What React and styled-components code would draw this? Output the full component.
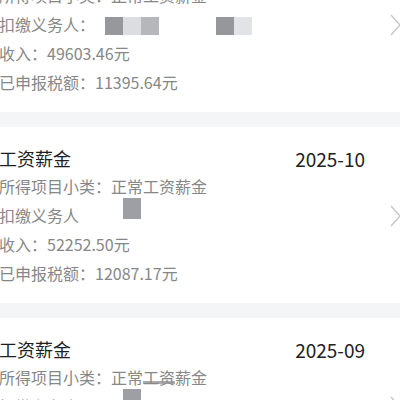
import React from "react";
import styled, { createGlobalStyle } from "styled-components";

const Global = createGlobalStyle`
  html, body {
    margin: 0;
    padding: 0;
    background: #f4f5f7;
    font-family: "Noto Sans CJK SC", "Noto Sans", sans-serif;
  }
`;

const records = [
  {
    id: 1,
    title: "工资薪金",
    month: "2025-11",
    sub: "正常工资薪金",
    payer: "a",
    income: "49603.46",
    tax: "11395.64",
  },
  {
    id: 2,
    title: "工资薪金",
    month: "2025-10",
    sub: "正常工资薪金",
    payer: "b",
    income: "52252.50",
    tax: "12087.17",
  },
  {
    id: 3,
    title: "工资薪金",
    month: "2025-09",
    sub: "正常工资薪金",
    payer: "b",
    income: "48811.02",
    tax: "11062.33",
    smudge: true,
  },
];

function Chevron() {
  return (
    <Arrow viewBox="0 0 14 22" width="14" height="22">
      <path d="M1 1 L10 11 L1 21" fill="none" stroke="#c6c6c8" strokeWidth="1.4" />
    </Arrow>
  );
}

function Payer({ kind }) {
  if (kind === "a") {
    return (
      <>
        扣缴义务人：
        <Masks $gap="10px">
          <Block $c="#97989c" />
          <Block $c="#dcdde1" />
          <Block $c="#b6b7bb" />
        </Masks>
        <Masks $gap="57px">
          <Block $c="#96979b" />
          <Block $c="#e2e3e6" />
        </Masks>
      </>
    );
  }
  return (
    <>
      扣缴义务人
      <Masks $gap="44px">
        <Block $c="#9e9fa4" $tall />
      </Masks>
    </>
  );
}

function RecordCard({ r }) {
  return (
    <Card>
      <Body>
        <TitleRow>
          <Title>{r.title}</Title>
          <Month>{r.month}</Month>
        </TitleRow>
        <Line>
          所得项目小类：
          {r.smudge ? (
            <>
              正常<Smudge>工资</Smudge>薪金
            </>
          ) : (
            r.sub
          )}
        </Line>
        <Line>
          <Payer kind={r.payer} />
        </Line>
        <Line>收入：{r.income}元</Line>
        <Line>已申报税额：{r.tax}元</Line>
      </Body>
      <Chevron />
    </Card>
  );
}

export default function App() {
  return (
    <>
      <Global />
      <Page>
        <List>
          {records.map((r) => (
            <RecordCard key={r.id} r={r} />
          ))}
        </List>
      </Page>
    </>
  );
}

const Page = styled.div`
  width: 400px;
  height: 400px;
  overflow: hidden;
`;

const List = styled.div`
  display: flex;
  flex-direction: column;
  gap: 15px;
  margin-top: -64px;
`;

const Card = styled.div`
  background: #ffffff;
  display: flex;
  align-items: center;
  padding: 17px 0 15px 0;
  margin-left: -1px;
`;

const Body = styled.div`
  flex: 1;
  padding-right: 15px;
  margin-right: 10px;
`;

const TitleRow = styled.div`
  display: flex;
  justify-content: space-between;
  align-items: center;
  height: 28px;
`;

const Title = styled.div`
  font-size: 18px;
  color: #1f1f1f;
`;

const Month = styled.div`
  font-size: 19px;
  color: #222222;
`;

const Line = styled.div`
  font-size: 16px;
  line-height: 29px;
  height: 29px;
  color: #878787;
  white-space: nowrap;
  display: flex;
  align-items: center;
  &:first-of-type {
    margin-top: 1px;
  }
`;

const Masks = styled.span`
  display: inline-flex;
  margin-left: ${(p) => p.$gap};
`;

const Block = styled.span`
  display: inline-block;
  width: 18px;
  height: ${(p) => (p.$tall ? "21px" : "18px")};
  margin-top: ${(p) => (p.$tall ? "-14px" : "2px")};
  background: ${(p) => p.$c};
`;

const Smudge = styled.span`
  background: linear-gradient(
    to bottom,
    transparent 62%,
    #a9aaae 62%,
    #a9aaae 74%,
    transparent 74%
  );
`;

const Arrow = styled.svg`
  flex-shrink: 0;
  margin-right: -4px;
`;
